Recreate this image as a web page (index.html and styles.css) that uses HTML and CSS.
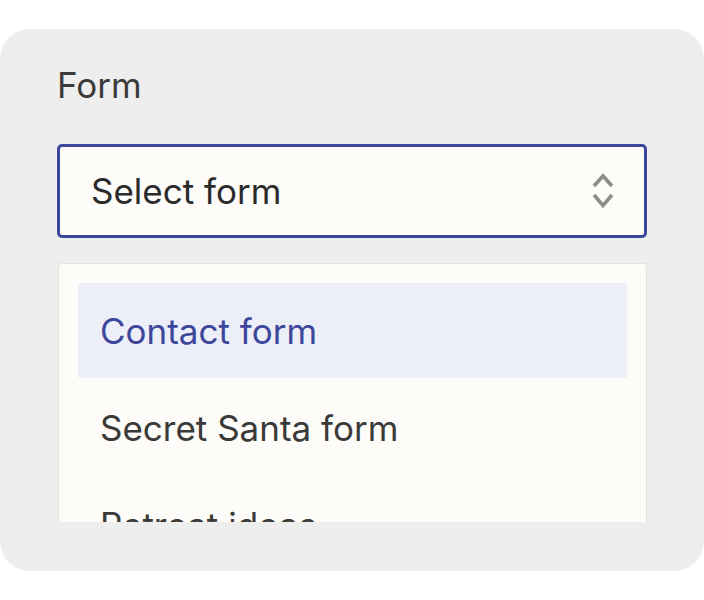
FILE: index.html
```html
<!DOCTYPE html>
<html lang="en">
<head>
<meta charset="utf-8">
<title>Form select</title>
<link rel="stylesheet" href="styles.css">
</head>
<body>
<div class="card">
  <div class="label">Form</div>
  <div class="select">
    <span class="select-text">Select form</span>
    <svg class="chevrons" width="22" height="38" viewBox="0 0 22 38" aria-hidden="true">
      <path d="M2 14 L11 4 L20 14" />
      <path d="M2 23 L11 33.5 L20 23" />
    </svg>
  </div>
  <div class="list">
    <div class="item active">Contact form</div>
    <div class="item">Secret Santa form</div>
    <div class="item">Retreat ideas</div>
  </div>
</div>
</body>
</html>
```
FILE: styles.css
```css
html, body {
  margin: 0;
  padding: 0;
  background: #ffffff;
}
body {
  font-family: "Inter", "Noto Sans", sans-serif;
  padding-top: 29px;
}
.card {
  width: 704px;
  box-sizing: border-box;
  background: #eeeeee;
  border-radius: 30px;
  padding: 35px 57px 49px 57px;
}
.label {
  font-size: 35px;
  line-height: 42px;
  color: #3a3a3a;
}
.select {
  margin-top: 38px;
  height: 94px;
  box-sizing: border-box;
  border: 3px solid #3c469a;
  border-radius: 5px;
  background: #fdfcf9;
  display: flex;
  align-items: center;
  justify-content: space-between;
  padding: 0 30px 0 31px;
}
.select-text {
  font-size: 35px;
  color: #2b2b2b;
}
.chevrons {
  fill: none;
  stroke: #8c8c88;
  stroke-width: 3.6;
}
.list {
  margin-top: 25px;
  margin-left: 1px;
  height: 259px;
  box-sizing: border-box;
  overflow: hidden;
  background: #fdfcf9;
  border: 1px solid #e4e2dc;
  border-bottom: none;
  border-radius: 4px 4px 0 0;
  padding: 19px 19px 0 19px;
  display: flex;
  flex-direction: column;
  gap: 2px;
}
.item {
  flex: none;
  height: 95px;
  display: flex;
  align-items: center;
  padding-left: 22px;
  font-size: 35px;
  color: #3a3a38;
  border-radius: 2px;
}
.item.active {
  background: #eceef8;
  color: #3c469a;
}
```
